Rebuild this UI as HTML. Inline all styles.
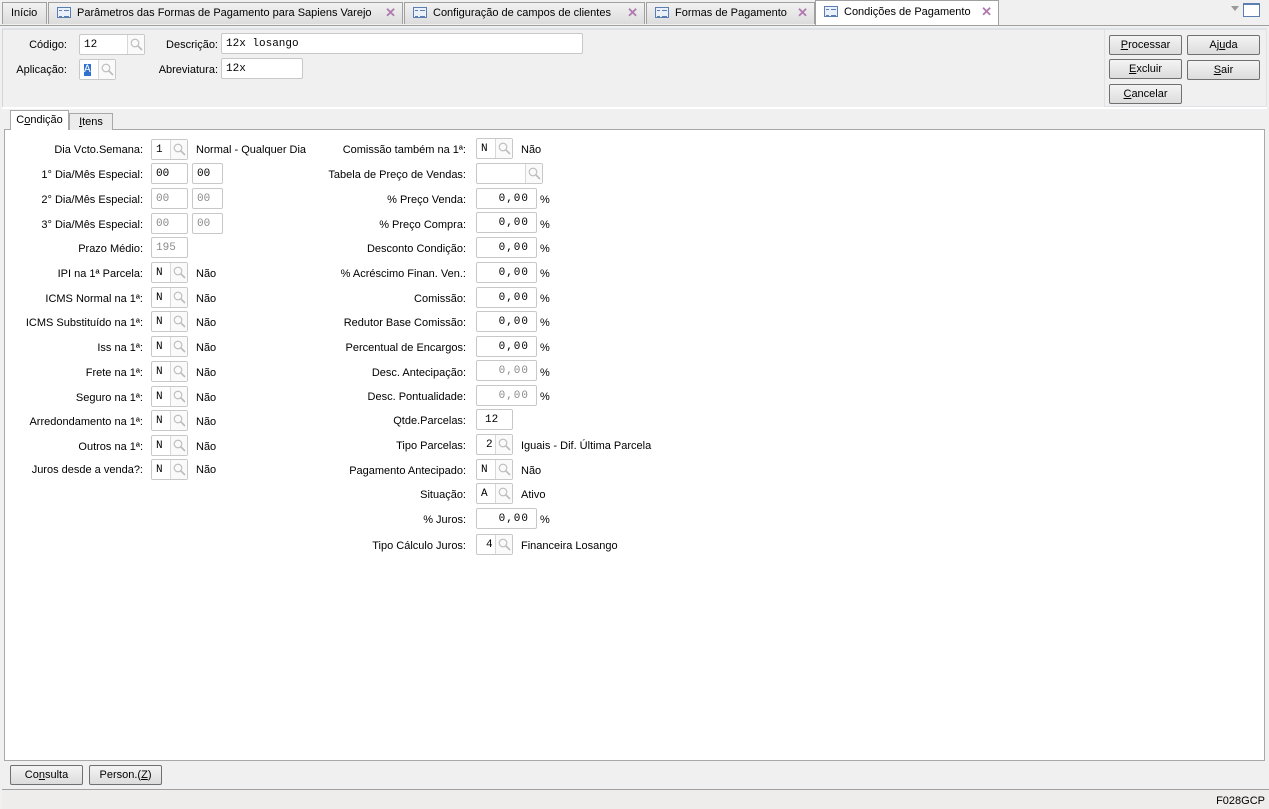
<!DOCTYPE html>
<html><head><meta charset="utf-8"><style>
*{box-sizing:border-box;margin:0;padding:0}
body{width:1269px;height:809px;background:#f0f0f0;font-family:"Liberation Sans",sans-serif;font-size:11px;color:#000;position:relative;overflow:hidden}
.a{position:absolute}
.tab{position:absolute;top:2px;height:22px;background:linear-gradient(#f2f2f2,#dcdcdc);border:1px solid #a0a0a0;border-bottom:none;line-height:20px;padding-left:8px;white-space:nowrap}
.tab.act{background:#fff;height:25px;top:0}
.ti{display:inline-block;width:14px;height:11px;border:1px solid #5a7fb0;background:#eaf1fb;vertical-align:-2px;margin-right:6px;position:relative}
.ti:before{content:"";position:absolute;left:1px;top:2px;width:3px;height:5px;border-top:1px solid #5a7fb0;border-bottom:1px solid #5a7fb0}
.ti:after{content:"";position:absolute;left:6px;top:2px;width:5px;height:5px;border-top:1px solid #5a7fb0;border-bottom:1px solid #5a7fb0}
.x{position:absolute;right:6px;top:0;color:#b07ab0;font-size:13px;font-weight:bold}
.btn{position:absolute;height:20px;border:1px solid #707070;border-radius:2px;background:linear-gradient(#f4f4f4,#dcdcdc);text-align:center;line-height:18px}
.l{position:absolute;text-align:right;white-space:nowrap;line-height:14px}
.in{position:absolute;height:21px;border:1px solid #c8c8c8;border-radius:2px;background:#fff;font-family:"Liberation Mono",monospace;font-size:11px;line-height:19px;padding-left:4px;padding-top:1px;white-space:nowrap}
.in.g{color:#8a8a8a}
.in.r{text-align:right;padding-right:7px;letter-spacing:1px}
.lk{position:absolute;right:0;top:0;width:17px;height:19px;border-left:1px solid #d8d8d8;background:#fafafa}
.lk svg{position:absolute;left:2px;top:3px}
.t{position:absolute;white-space:nowrap;line-height:14px}
u{text-decoration:underline}
</style></head><body>
<svg width="0" height="0" style="position:absolute"><defs><symbol id="m" viewBox="0 0 13 13"><circle cx="5" cy="5" r="3.8" fill="none" stroke="#bcbcbc" stroke-width="1.1"/><path d="M8 8 L12 12" stroke="#bcbcbc" stroke-width="1.6"/></symbol></defs></svg>
<!-- tab bar -->
<div class="a" style="left:0;top:25px;width:1269px;height:1px;background:#a0a0a0"></div>
<div class="tab" style="left:2px;width:45px">Início</div>
<div class="tab" style="left:48px;width:355px"><span class="ti"></span>Parâmetros das Formas de Pagamento para Sapiens Varejo<span class="x">✕</span></div>
<div class="tab" style="left:404px;width:241px"><span class="ti"></span>Configuração de campos de clientes<span class="x">✕</span></div>
<div class="tab" style="left:646px;width:169px"><span class="ti"></span>Formas de Pagamento<span class="x">✕</span></div>
<div class="tab act" style="left:815px;width:184px;line-height:22px"><span class="ti"></span>Condições de Pagamento<span class="x">✕</span></div>
<div class="a" style="left:1231px;top:6px;width:0;height:0;border-left:4px solid transparent;border-right:4px solid transparent;border-top:5px solid #999"></div>
<div class="a" style="left:1243px;top:3px;width:17px;height:14px;border:1px solid #5a7fb0;border-top-width:2px;background:#fff"></div>
<!-- header -->
<div class="a" style="left:2px;top:28px;width:1265px;height:80px;border-left:1px solid #d5d5d5;border-top:2px solid #dde1e6;background:#f0f0f0"></div>
<div class="a" style="left:2px;top:107px;width:1265px;height:2px;background:#fff"></div>
<div class="l" style="left:0;width:67px;top:38px">Código:</div>
<div class="in" style="left:79px;top:34px;width:66px">12<span class="lk"><svg width="13" height="13"><use href="#m"/></svg></span></div>
<div class="l" style="left:0;width:67px;top:63px">Aplicação:</div>
<div class="in" style="left:79px;top:59px;width:37px"><span style="background:#3070d0;color:#fff">A</span><span class="lk"><svg width="13" height="13"><use href="#m"/></svg></span></div>
<div class="l" style="left:140px;width:78px;top:38px">Descrição:</div>
<div class="in" style="left:221px;top:33px;width:362px">12x losango</div>
<div class="l" style="left:140px;width:78px;top:63px">Abreviatura:</div>
<div class="in" style="left:221px;top:58px;width:82px">12x</div>
<div class="a" style="left:1104px;top:29px;width:163px;height:78px;border:1px solid #dfe3e8"></div>
<div class="btn" style="left:1109px;top:35px;width:73px"><u>P</u>rocessar</div>
<div class="btn" style="left:1187px;top:35px;width:73px">Aj<u>u</u>da</div>
<div class="btn" style="left:1109px;top:59px;width:73px"><u>E</u>xcluir</div>
<div class="btn" style="left:1187px;top:60px;width:73px"><u>S</u>air</div>
<div class="btn" style="left:1109px;top:84px;width:73px"><u>C</u>ancelar</div>
<!-- inner tabs -->
<div class="a" style="left:4px;top:129px;width:1261px;height:632px;background:#fff;border:1px solid #a8a8a8"></div>
<div class="a" style="left:10px;top:110px;width:59px;height:20px;background:#fff;border:1px solid #a8a8a8;border-bottom:none;text-align:center;line-height:18px">C<u>o</u>ndição</div>
<div class="a" style="left:69px;top:113px;width:44px;height:17px;background:#ececec;border:1px solid #a8a8a8;border-bottom:none;text-align:center;line-height:16px"><u>I</u>tens</div>
<!-- left column -->
<div class="l" style="left:0;width:143px;top:143px">Dia Vcto.Semana:</div>
<div class="in" style="left:151px;top:139px;width:37px">1<span class="lk"><svg width="13" height="13"><use href="#m"/></svg></span></div>
<div class="t" style="left:196px;top:143px">Normal - Qualquer Dia</div>
<div class="l" style="left:0;width:143px;top:168px">1° Dia/Mês Especial:</div>
<div class="in" style="left:151px;top:163px;width:37px">00</div>
<div class="in" style="left:192px;top:163px;width:31px">00</div>
<div class="l" style="left:0;width:143px;top:193px">2° Dia/Mês Especial:</div>
<div class="in g" style="left:151px;top:188px;width:37px">00</div>
<div class="in g" style="left:192px;top:188px;width:31px">00</div>
<div class="l" style="left:0;width:143px;top:218px">3° Dia/Mês Especial:</div>
<div class="in g" style="left:151px;top:213px;width:37px">00</div>
<div class="in g" style="left:192px;top:213px;width:31px">00</div>
<div class="l" style="left:0;width:143px;top:242px">Prazo Médio:</div>
<div class="in g" style="left:151px;top:237px;width:37px">195</div>
<div class="l" style="left:0;width:143px;top:267px">IPI na 1ª Parcela:</div>
<div class="in" style="left:151px;top:262px;width:37px">N<span class="lk"><svg width="13" height="13"><use href="#m"/></svg></span></div>
<div class="t" style="left:196px;top:267px">Não</div>
<div class="l" style="left:0;width:143px;top:292px">ICMS Normal na 1ª:</div>
<div class="in" style="left:151px;top:287px;width:37px">N<span class="lk"><svg width="13" height="13"><use href="#m"/></svg></span></div>
<div class="t" style="left:196px;top:292px">Não</div>
<div class="l" style="left:0;width:143px;top:316px">ICMS Substituído na 1ª:</div>
<div class="in" style="left:151px;top:311px;width:37px">N<span class="lk"><svg width="13" height="13"><use href="#m"/></svg></span></div>
<div class="t" style="left:196px;top:316px">Não</div>
<div class="l" style="left:0;width:143px;top:341px">Iss na 1ª:</div>
<div class="in" style="left:151px;top:336px;width:37px">N<span class="lk"><svg width="13" height="13"><use href="#m"/></svg></span></div>
<div class="t" style="left:196px;top:341px">Não</div>
<div class="l" style="left:0;width:143px;top:366px">Frete na 1ª:</div>
<div class="in" style="left:151px;top:361px;width:37px">N<span class="lk"><svg width="13" height="13"><use href="#m"/></svg></span></div>
<div class="t" style="left:196px;top:366px">Não</div>
<div class="l" style="left:0;width:143px;top:391px">Seguro na 1ª:</div>
<div class="in" style="left:151px;top:386px;width:37px">N<span class="lk"><svg width="13" height="13"><use href="#m"/></svg></span></div>
<div class="t" style="left:196px;top:391px">Não</div>
<div class="l" style="left:0;width:143px;top:415px">Arredondamento na 1ª:</div>
<div class="in" style="left:151px;top:410px;width:37px">N<span class="lk"><svg width="13" height="13"><use href="#m"/></svg></span></div>
<div class="t" style="left:196px;top:415px">Não</div>
<div class="l" style="left:0;width:143px;top:440px">Outros na 1ª:</div>
<div class="in" style="left:151px;top:435px;width:37px">N<span class="lk"><svg width="13" height="13"><use href="#m"/></svg></span></div>
<div class="t" style="left:196px;top:440px">Não</div>
<div class="l" style="left:0;width:143px;top:463px">Juros desde a venda?:</div>
<div class="in" style="left:151px;top:459px;width:37px">N<span class="lk"><svg width="13" height="13"><use href="#m"/></svg></span></div>
<div class="t" style="left:196px;top:463px">Não</div>
<!-- right column -->
<div class="l" style="left:200px;width:266px;top:143px">Comissão também na 1ª:</div>
<div class="in" style="left:476px;top:138px;width:37px">N<span class="lk"><svg width="13" height="13"><use href="#m"/></svg></span></div>
<div class="t" style="left:521px;top:143px">Não</div>
<div class="l" style="left:200px;width:266px;top:168px">Tabela de Preço de Vendas:</div>
<div class="in" style="left:476px;top:163px;width:67px"><span class="lk"><svg width="13" height="13"><use href="#m"/></svg></span></div>
<div class="l" style="left:200px;width:266px;top:193px">% Preço Venda:</div>
<div class="in r" style="left:476px;top:188px;width:61px">0,00</div><div class="t" style="left:540px;top:193px">%</div>
<div class="l" style="left:200px;width:266px;top:218px">% Preço Compra:</div>
<div class="in r" style="left:476px;top:212px;width:61px">0,00</div><div class="t" style="left:540px;top:218px">%</div>
<div class="l" style="left:200px;width:266px;top:242px">Desconto Condição:</div>
<div class="in r" style="left:476px;top:237px;width:61px">0,00</div><div class="t" style="left:540px;top:242px">%</div>
<div class="l" style="left:200px;width:266px;top:267px">% Acréscimo Finan. Ven.:</div>
<div class="in r" style="left:476px;top:262px;width:61px">0,00</div><div class="t" style="left:540px;top:267px">%</div>
<div class="l" style="left:200px;width:266px;top:292px">Comissão:</div>
<div class="in r" style="left:476px;top:287px;width:61px">0,00</div><div class="t" style="left:540px;top:292px">%</div>
<div class="l" style="left:200px;width:266px;top:316px">Redutor Base Comissão:</div>
<div class="in r" style="left:476px;top:311px;width:61px">0,00</div><div class="t" style="left:540px;top:316px">%</div>
<div class="l" style="left:200px;width:266px;top:341px">Percentual de Encargos:</div>
<div class="in r" style="left:476px;top:336px;width:61px">0,00</div><div class="t" style="left:540px;top:341px">%</div>
<div class="l" style="left:200px;width:266px;top:366px">Desc. Antecipação:</div>
<div class="in r g" style="left:476px;top:360px;width:61px">0,00</div><div class="t" style="left:540px;top:366px">%</div>
<div class="l" style="left:200px;width:266px;top:390px">Desc. Pontualidade:</div>
<div class="in r g" style="left:476px;top:385px;width:61px">0,00</div><div class="t" style="left:540px;top:390px">%</div>
<div class="l" style="left:200px;width:266px;top:414px">Qtde.Parcelas:</div>
<div class="in" style="left:476px;top:409px;width:37px;padding-left:8px">12</div>
<div class="l" style="left:200px;width:266px;top:439px">Tipo Parcelas:</div>
<div class="in" style="left:476px;top:434px;width:37px;padding-left:9px">2<span class="lk"><svg width="13" height="13"><use href="#m"/></svg></span></div>
<div class="t" style="left:521px;top:439px">Iguais - Dif. Última Parcela</div>
<div class="l" style="left:200px;width:266px;top:464px">Pagamento Antecipado:</div>
<div class="in" style="left:476px;top:459px;width:37px">N<span class="lk"><svg width="13" height="13"><use href="#m"/></svg></span></div>
<div class="t" style="left:521px;top:464px">Não</div>
<div class="l" style="left:200px;width:266px;top:488px">Situação:</div>
<div class="in" style="left:476px;top:483px;width:37px">A<span class="lk"><svg width="13" height="13"><use href="#m"/></svg></span></div>
<div class="t" style="left:521px;top:488px">Ativo</div>
<div class="l" style="left:200px;width:266px;top:513px">% Juros:</div>
<div class="in r" style="left:476px;top:508px;width:61px">0,00</div><div class="t" style="left:540px;top:513px">%</div>
<div class="l" style="left:200px;width:266px;top:539px">Tipo Cálculo Juros:</div>
<div class="in" style="left:476px;top:534px;width:37px;padding-left:9px">4<span class="lk"><svg width="13" height="13"><use href="#m"/></svg></span></div>
<div class="t" style="left:521px;top:539px">Financeira Losango</div>
<!-- bottom -->
<div class="btn" style="left:10px;top:765px;width:73px">Co<u>n</u>sulta</div>
<div class="btn" style="left:89px;top:765px;width:73px">Person.(<u>Z</u>)</div>
<div class="a" style="left:2px;top:789px;width:1267px;height:1px;background:#a0a0a0"></div>
<div class="a" style="left:2px;top:790px;width:1267px;height:19px;background:#efedec"></div>
<div class="t" style="right:4px;top:794px">F028GCP</div>
</body></html>
